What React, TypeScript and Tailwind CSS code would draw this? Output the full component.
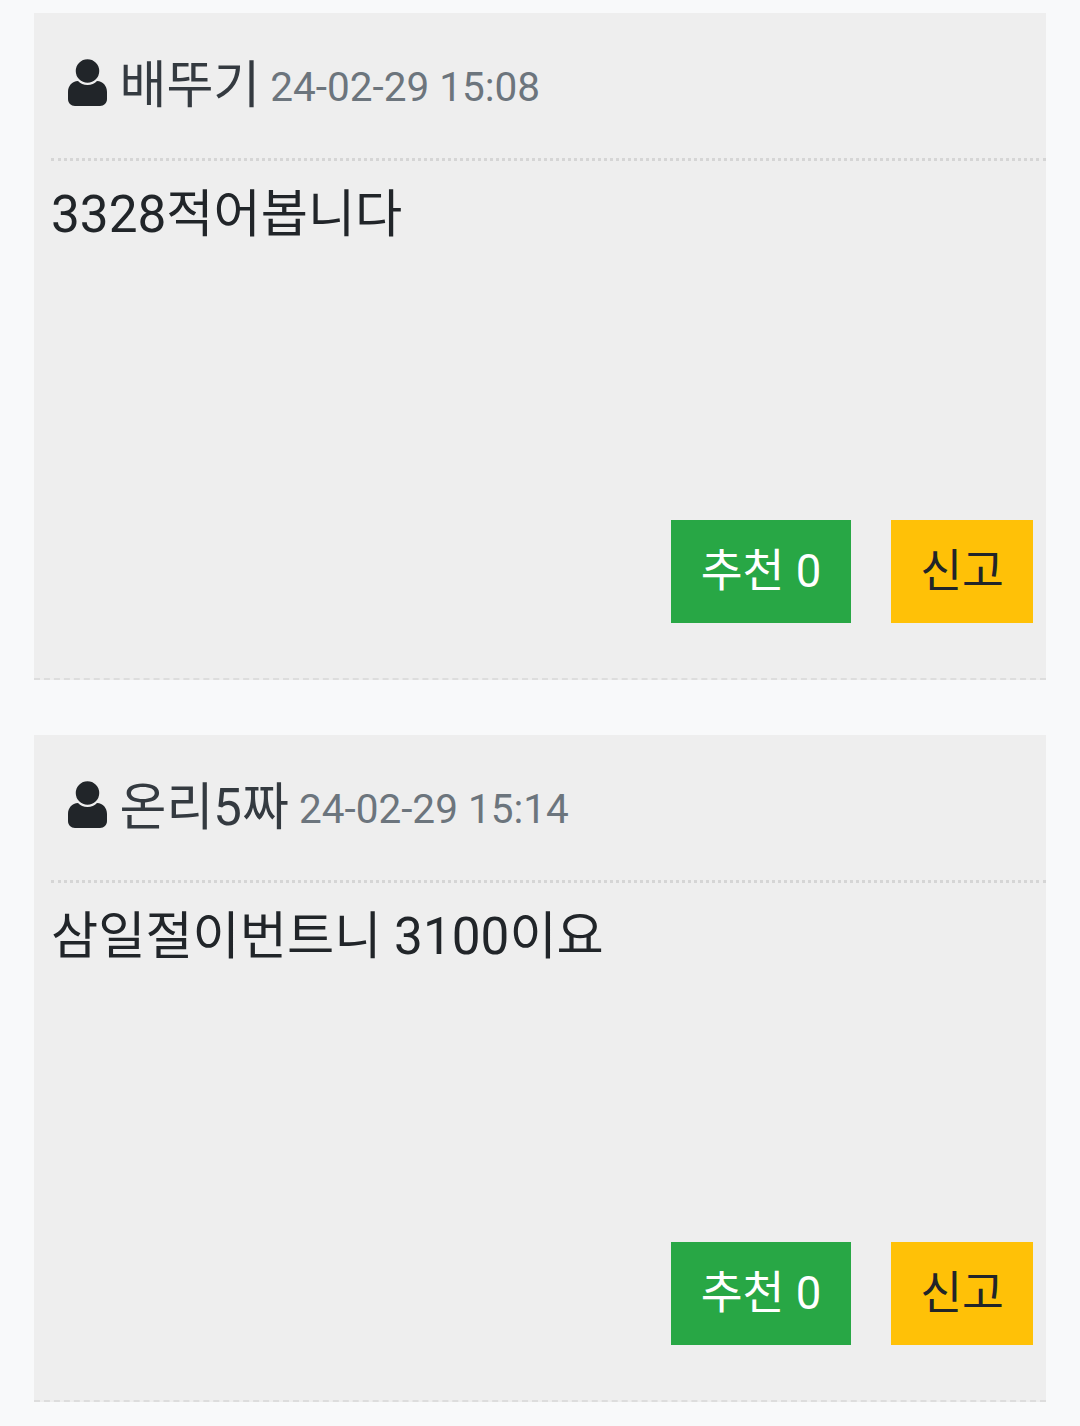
const font = "font-['Roboto','Noto_Sans_CJK_KR',sans-serif]";

function UserIcon() {
  return (
    <svg viewBox="0 0 39 47" className="mb-[6px] h-[47px] w-[39px] shrink-0">
      <path
        className="fill-[#212529]"
        d="M10 22c2.500 2.500 5.500 4 9.500 4s7-1.500 9.500-4c6 0 10 5 10 11v7c0 4-3 7-7 7H7c-4 0-7-3-7-7v-7c0-6 4-11 10-11z"
      />
      <circle cx="19.500" cy="12" r="12.500" className="fill-[#212529] stroke-[#eeeeee] stroke-[1.500]" />
    </svg>
  );
}

function Comment({ name, date, body }: { name: string; date: string; body: string }) {
  return (
    <div className="flex h-[667px] flex-col border-b-2 border-dashed border-[#dddddd] bg-[#eeeeee] pl-[17px]">
      <div className="flex h-[148px] items-center gap-[13px] border-b-[3px] border-dotted border-[#d5d5d5] pl-[16.500px]">
        <UserIcon />
        <div className="flex items-baseline gap-[10px]">
          <span className="text-[51px] leading-none text-[#343a40]">{name}</span>
          <span className="-translate-y-[2px] text-[40.500px] leading-none text-[#6c757d]">{date}</span>
        </div>
      </div>
      <p className="mt-[24px] text-[51.300px] leading-[60px] text-[#212529]">{body}</p>
      <div className="mt-auto mb-[55px] flex justify-end gap-[40px] pr-[13px]">
        <button className="flex h-[103px] w-[180px] items-center justify-center bg-[#28a745] pt-[2px] text-[45.500px] text-white">추천 0</button>
        <button className="flex h-[103px] w-[142px] items-center justify-center bg-[#ffc107] pt-[2px] text-[45.500px] text-[#212529]">신고</button>
      </div>
    </div>
  );
}

export default function App() {
  return (
    <div className={`${font} flex h-[1426px] flex-col gap-[55px] overflow-hidden bg-[#f8f9fa] px-[34px] pt-[13px]`}>
      <Comment name="배뚜기" date="24-02-29 15:08" body="3328적어봅니다" />
      <Comment name="온리5짜" date="24-02-29 15:14" body="삼일절이번트니 3100이요" />
    </div>
  );
}
